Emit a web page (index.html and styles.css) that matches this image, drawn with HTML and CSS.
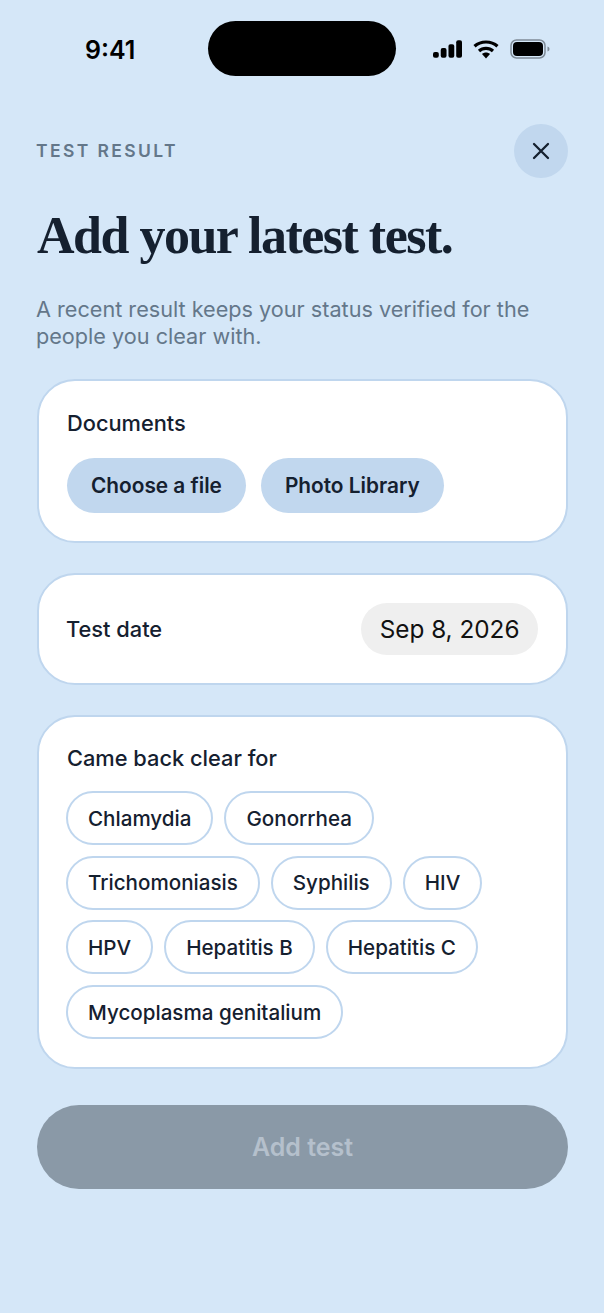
FILE: index.html
```html
<!DOCTYPE html>
<html lang="en">
<head>
<meta charset="utf-8">
<title>Add test</title>
<link rel="stylesheet" href="styles.css">
</head>
<body>
<main class="screen">
  <div class="status">
    <span class="time">9:41</span>
    <span class="island"></span>
    <span class="status-icons">
      <svg class="ico-signal" viewBox="0 0 30 18" width="29" height="18"><rect x="0" y="12" width="6" height="6" rx="2"/><rect x="8" y="8" width="6" height="10" rx="2"/><rect x="16" y="4" width="6" height="14" rx="2"/><rect x="24" y="0" width="6" height="18" rx="2"/></svg>
      <svg class="ico-wifi" viewBox="0 0 26 19" width="26" height="19"><path d="M1.5 6.2C7.8 .6 18.200 .6 24.500 6.200" fill="none" stroke="#000" stroke-width="3.200"/><path d="M6 11C9.800 7.500 16.200 7.500 20 11" fill="none" stroke="#000" stroke-width="3.200"/><path d="M9 14 13 18.500 17 14C14.700 12 11.300 12 9 14Z"/></svg>
      <svg class="ico-battery" viewBox="0 0 40 20" width="40" height="20"><rect x="1" y="1" width="34" height="18" rx="5.500" fill="none" stroke="#7f8b97" stroke-width="1.500"/><rect x="3" y="3" width="30" height="14" rx="4"/><path d="M37.500 7.500C39 8 39.500 9 39.500 10S39 12 37.500 12.500Z" fill="#7f8b97"/></svg>
    </span>
  </div>

  <header class="head">
    <span class="eyebrow">TEST RESULT</span>
    <button class="close" aria-label="Close">
      <svg viewBox="0 0 18 18" width="18" height="18"><path d="M2 2 16 16M16 2 2 16" stroke="#15202f" stroke-width="2.300" stroke-linecap="round" fill="none"/></svg>
    </button>
  </header>

  <h1 class="title">Add your latest test.</h1>
  <p class="lede">A recent result keeps your status verified for the people you clear with.</p>

  <section class="card card-docs">
    <h2 class="label">Documents</h2>
    <div class="actions">
      <button class="action">Choose a file</button>
      <button class="action">Photo Library</button>
    </div>
  </section>

  <section class="card card-date">
    <h2 class="label">Test date</h2>
    <span class="date">Sep 8, 2026</span>
  </section>

  <section class="card card-clear">
    <h2 class="label">Came back clear for</h2>
    <div class="chips">
      <span class="chip">Chlamydia</span>
      <span class="chip">Gonorrhea</span>
      <span class="chip">Trichomoniasis</span>
      <span class="chip">Syphilis</span>
      <span class="chip">HIV</span>
      <span class="chip">HPV</span>
      <span class="chip">Hepatitis B</span>
      <span class="chip">Hepatitis C</span>
      <span class="chip">Mycoplasma genitalium</span>
    </div>
  </section>

  <button class="submit" disabled>Add test</button>
</main>
</body>
</html>
```
FILE: styles.css
```css
* { box-sizing: border-box; margin: 0; padding: 0; }
html, body { width: 604px; height: 1313px; overflow: hidden; background: #d5e7f8; }
body { font-family: Inter, "Liberation Sans", sans-serif; color: #15202f; }
button { font-family: inherit; border: 0; color: inherit; }

.screen { display: flex; flex-direction: column; height: 1313px; padding: 21px 36px 0 37px; }

.status { display: flex; align-items: center; height: 55px; margin: 0 -36px 0 -37px; padding: 0 53px 0 85px; }
.time { width: 123px; font-size: 25px; font-weight: 600; color: #000; line-height: 55px; margin-top: 3px; }
.island { width: 188px; height: 55px; border-radius: 28px; background: #000; }
.status-icons { display: flex; align-items: center; margin-left: 37px; margin-top: 1px; }
.status-icons svg { display: block; fill: #000; }
.ico-wifi { margin-left: 11px; }
.ico-battery { margin-left: 11px; }

.head { display: flex; justify-content: space-between; align-items: center; margin-top: 48px; height: 54px; }
.eyebrow { margin-left: -1px; padding-bottom: 2px; font-size: 17.500px; font-weight: 600; letter-spacing: 2.400px; color: #64778a; }
.close { display: flex; align-items: center; justify-content: center; width: 54px; height: 54px; border-radius: 50%; background: #c1d7ee; }

.title { margin-top: 28px; font-family: "Liberation Serif", serif; font-size: 52px; line-height: 60px; font-weight: 700; letter-spacing: -1.500px; color: #15202f; }
.lede { margin-top: 30px; margin-left: -1px; font-size: 21.650px; line-height: 27px; color: #64778a; }

.card { background: #fff; border: 2px solid #bfd6ee; border-radius: 38px; }
.label { font-size: 21.800px; font-weight: 500; line-height: 28px; color: #15202f; }

.card-docs { margin-top: 29px; height: 164px; padding: 28px 28px 0; }
.actions { display: flex; gap: 15px; margin-top: 21px; }
.action { height: 55px; padding: 0 24px; border-radius: 28px; background: #c1d7ee; font-size: 20.800px; font-weight: 600; }

.card-date { display: flex; align-items: center; justify-content: space-between; margin-top: 30px; height: 112px; padding: 0 28px 0 27px; }
.date { display: flex; align-items: center; height: 52px; padding: 0 18.500px; border-radius: 26px; background: #efefef; font-size: 24.300px; color: #111; }

.card-clear { margin-top: 30px; height: 354px; padding: 27px 28px 0; }
.chips { display: flex; flex-wrap: wrap; gap: 10.700px 11px; margin: 19px 0 0 -1px; }
.chip { display: flex; align-items: center; height: 54px; padding: 0 20px; border: 2px solid #bfd6ee; border-radius: 27px; font-size: 20.600px; font-weight: 500; background: #fff; }

.submit { margin-top: 36px; height: 84px; border-radius: 42px; background: #8a99a7; color: #b5c0cc; font-size: 25px; font-weight: 600; }
```
